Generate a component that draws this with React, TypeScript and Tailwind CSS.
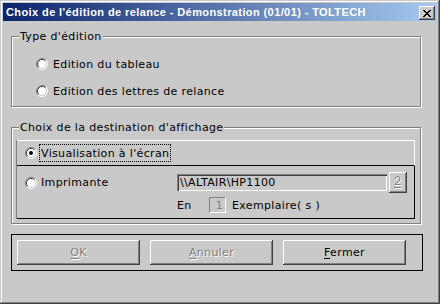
import React from "react";

function Radio({ checked }: { checked?: boolean }) {
  return (
    <svg width="12" height="12" viewBox="0 0 12 12" className="shrink-0">
      <circle cx="6" cy="6" r="5" fill="#ffffff" />
      <path d="M2.11 9.89 A5.5 5.5 0 0 1 9.89 2.11" fill="none" stroke="#808080" />
      <path d="M9.89 2.11 A5.5 5.5 0 0 1 2.11 9.89" fill="none" stroke="#ffffff" />
      <path d="M2.82 9.18 A4.5 4.5 0 0 1 9.18 2.82" fill="none" stroke="#404040" />
      <path d="M9.18 2.82 A4.5 4.5 0 0 1 2.82 9.18" fill="none" stroke="#c9c9c9" />
      {checked && <circle cx="6" cy="6" r="2" fill="#000000" />}
    </svg>
  );
}

function CloseX() {
  const rects = [];
  for (let i = 0; i < 7; i++) {
    rects.push(<rect key={"a" + i} x={i} y={i} width={2} height={1} fill="#000" />);
    rects.push(<rect key={"b" + i} x={6 - i} y={i} width={2} height={1} fill="#000" />);
  }
  return (
    <svg width="8" height="7" viewBox="0 0 8 7" shapeRendering="crispEdges">
      {rects}
    </svg>
  );
}

function Btn({ label, disabled }: { label: string; disabled?: boolean }) {
  return (
    <div className="w-[123px] h-[25px] flex items-center justify-center bg-[#c9c9c9] shadow-[inset_-1px_-1px_0_#404040,inset_1px_1px_0_#ffffff,inset_-2px_-2px_0_#808080,inset_2px_2px_0_#c9c9c9]">
      <span
        className={
          disabled
            ? "text-[#808080] [text-shadow:1px_1px_0_#ffffff]"
            : "text-black"
        }
      >
        <span className="underline underline-offset-[2px]">{label[0]}</span>
        {label.slice(1)}
      </span>
    </div>
  );
}

export default function App() {
  return (
    <div className="w-[440px] h-[304px] bg-[#c9c9c9] p-[3px] flex flex-col shadow-[inset_-1px_-1px_0_#404040,inset_1px_1px_0_#c9c9c9,inset_-2px_-2px_0_#808080,inset_2px_2px_0_#ffffff] font-['DejaVu_Sans',sans-serif] text-[11px] tracking-[0.35px] leading-[13px] text-black">
      {/* Title bar */}
      <div className="h-[18px] shrink-0 flex items-start justify-between pl-[3px] pr-[2px] bg-[linear-gradient(to_right,#0a246a,#a6caf0)]">
        <span className="mt-[3px] font-['Liberation_Sans',Arial,sans-serif] font-bold text-[11px] tracking-[0.4px] text-white leading-[13px] whitespace-nowrap">
          Choix de l'édition de relance - Démonstration (01/01) - TOLTECH
        </span>
        <div className="mt-[3px] w-[16px] h-[14px] bg-[#c9c9c9] flex items-center justify-center shadow-[inset_-1px_-1px_0_#404040,inset_1px_1px_0_#ffffff,inset_-2px_-2px_0_#808080,inset_2px_2px_0_#c9c9c9]">
          <CloseX />
        </div>
      </div>

      <div className="pl-[8px] flex flex-col">
        {/* Group 1 */}
        <div className="relative mt-[15px] w-[410px] h-[71px] border border-[#808080] shadow-[inset_1px_1px_0_#ffffff,1px_1px_0_#ffffff] pt-[19px] pl-[24px] flex flex-col gap-[11px]">
          <span className="absolute left-[7px] top-[-7px] bg-[#c9c9c9] px-[1px] whitespace-nowrap">
            Type d'édition
          </span>
          <div className="h-[16px] flex items-center gap-[5px]">
            <Radio />
            <span>Edition du tableau</span>
          </div>
          <div className="h-[16px] flex items-center gap-[5px]">
            <Radio />
            <span>Edition des lettres de relance</span>
          </div>
        </div>

        {/* Group 2 */}
        <div className="relative mt-[20px] w-[410px] h-[97px] border border-[#808080] shadow-[inset_1px_1px_0_#ffffff,1px_1px_0_#ffffff] pt-[12px] pl-[4px]">
          <span className="absolute left-[7px] top-[-7px] bg-[#c9c9c9] px-[1px] whitespace-nowrap">
            Choix de la destination d'affichage
          </span>
          <div className="w-[399px] border-l border-[#808080] flex flex-col">
            <div className="h-[26px] border-t border-r border-t-white border-r-white border-b border-b-black flex items-center pl-[8px]">
              <Radio checked />
              <span className="ml-[2px] h-[18px] border border-dotted border-black px-[1px] flex items-center whitespace-nowrap">
                Visualisation à l'écran
              </span>
            </div>
            <div className="h-[53px] border-r border-b border-black pt-[6px] flex flex-col">
              <div className="h-[21px] flex items-center">
                <div className="w-[160px] pl-[8px] flex items-center gap-[4px]">
                  <Radio />
                  <span>Imprimante</span>
                </div>
                <div className="w-[210px] h-[17px] pl-[3px] flex items-center whitespace-nowrap shadow-[inset_1px_1px_0_#808080,inset_2px_2px_0_#404040,inset_-1px_-1px_0_#ffffff,inset_-2px_-2px_0_#c9c9c9]">
                  {"\\\\ALTAIR\\HP1100"}
                </div>
                <div className="ml-[2px] w-[18px] h-[21px] flex items-center justify-center shadow-[inset_-1px_-1px_0_#404040,inset_1px_1px_0_#ffffff,inset_-2px_-2px_0_#808080,inset_2px_2px_0_#c9c9c9]">
                  <svg width="10" height="15" viewBox="0 0 10 15">
                    <g fill="none" stroke="#ffffff" transform="translate(1,1)">
                      <path d="M2 4 Q2 1.5 4.5 1.5 Q7 1.5 7 4 Q7 5.5 2 9.5 H7.5" />
                      <path d="M1 12.5 H8" />
                    </g>
                    <g fill="none" stroke="#808080">
                      <path d="M2 4 Q2 1.5 4.5 1.5 Q7 1.5 7 4 Q7 5.5 2 9.5 H7.5" />
                      <path d="M1 12.5 H8" />
                    </g>
                  </svg>
                </div>
              </div>
              <div className="mt-[4px] h-[16px] flex items-center pl-[160px]">
                <span className="w-[32px]">En</span>
                <div className="w-[17px] h-[16px] border-t border-l border-[#808080] border-b border-r border-b-white border-r-white flex items-center justify-end pr-[2px] text-[#808080]">
                  1
                </div>
                <span className="ml-[6px] whitespace-nowrap">Exemplaire( s )</span>
              </div>
            </div>
          </div>
        </div>

        {/* Buttons */}
        <div className="mt-[10px] w-[412px] h-[37px] border border-black pt-[5px] pl-[5px] flex gap-[10px]">
          <Btn label="OK" disabled />
          <Btn label="Annuler" disabled />
          <Btn label="Fermer" />
        </div>
      </div>
    </div>
  );
}
